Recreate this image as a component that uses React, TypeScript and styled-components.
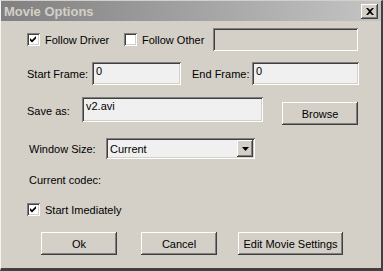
import styled, { createGlobalStyle } from "styled-components";

const GlobalStyle = createGlobalStyle`
  html, body {
    margin: 0;
    padding: 0;
    background: #d4d0c8;
  }
  body {
    font-family: "Liberation Sans", Arial, sans-serif;
    font-size: 11px;
    color: #000;
  }
`;

const raised = `
  box-shadow: inset -1px -1px #404040, inset 1px 1px #ffffff,
    inset -2px -2px #808080, inset 2px 2px #d4d0c8;
`;

const sunken = `
  box-shadow: inset 1px 1px #808080, inset -1px -1px #ffffff,
    inset 2px 2px #404040, inset -2px -2px #d4d0c8;
`;

const Window = styled.div`
  box-sizing: border-box;
  width: 383px;
  height: 271px;
  background: #d4d0c8;
  border-left: 1px solid #f4f4f4;
  border-top: 1px solid #d4d0c8;
  border-right: 2px solid #404040;
  border-bottom: 3px solid #404040;
  display: flex;
  flex-direction: column;
`;

const TitleBar = styled.div`
  height: 20px;
  display: flex;
  align-items: center;
  justify-content: space-between;
  padding: 0 3px 0 3px;
  background: linear-gradient(to right, #808080, #c4c4c4);
`;

const Title = styled.span`
  font-weight: bold;
  font-size: 13px;
  color: #d4d0c8;
`;

const CloseBtn = styled.div`
  width: 17px;
  height: 15px;
  background: #d4d0c8;
  display: flex;
  align-items: center;
  justify-content: center;
  ${raised}
`;

const Body = styled.div`
  display: flex;
  flex-direction: column;
  padding-left: 26px;
`;

const Row = styled.div<{ $top: number; $h: number; $left?: number; $align?: string }>`
  display: flex;
  align-items: ${(p) => p.$align ?? "center"};
  margin-top: ${(p) => p.$top}px;
  height: ${(p) => p.$h}px;
  padding-left: ${(p) => p.$left ?? 0}px;
`;

const Label = styled.span<{ $w?: number }>`
  width: ${(p) => (p.$w ? `${p.$w}px` : "auto")};
  flex-shrink: 0;
  white-space: nowrap;
`;

const Edit = styled.div<{ $w: number; $h?: number; $disabled?: boolean }>`
  box-sizing: border-box;
  width: ${(p) => p.$w}px;
  height: ${(p) => p.$h ?? 23}px;
  padding: 3px 4px;
  background: ${(p) => (p.$disabled ? "#d4d0c8" : "#f0f0f0")};
  white-space: nowrap;
  ${sunken}
`;

const CheckWrap = styled.label<{ $w?: number }>`
  display: flex;
  align-items: center;
  gap: 5px;
  width: ${(p) => (p.$w ? `${p.$w}px` : "auto")};
  flex-shrink: 0;
`;

const Box = styled.span`
  box-sizing: border-box;
  width: 13px;
  height: 13px;
  background: #ffffff;
  display: flex;
  align-items: center;
  justify-content: center;
  ${sunken}
`;

const Combo = styled.div`
  box-sizing: border-box;
  width: 149px;
  height: 21px;
  background: #f0f0f0;
  display: flex;
  align-items: center;
  justify-content: space-between;
  padding: 2px 2px 2px 4px;
  ${sunken}
`;

const DropBtn = styled.div`
  width: 16px;
  height: 17px;
  background: #d4d0c8;
  display: flex;
  align-items: center;
  justify-content: center;
  ${raised}
`;

const Button = styled.div<{ $w: number; $h?: number; $gap?: number }>`
  box-sizing: border-box;
  width: ${(p) => p.$w}px;
  height: ${(p) => p.$h ?? 23}px;
  margin-left: ${(p) => p.$gap ?? 0}px;
  display: flex;
  align-items: center;
  justify-content: center;
  background: #d4d0c8;
  flex-shrink: 0;
  ${raised}
`;

const Check = ({ checked }: { checked: boolean }) => (
  <Box>
    {checked && (
      <svg width="7" height="7" viewBox="0 0 7 7">
        <path d="M0 2 L2 4 L6 0 L6 2.5 L2 6.5 L0 4.5 Z" fill="#000" />
      </svg>
    )}
  </Box>
);

export default function App() {
  return (
    <>
      <GlobalStyle />
      <Window>
        <TitleBar>
          <Title>Movie Options</Title>
          <CloseBtn>
            <svg width="8" height="7" viewBox="0 0 8 7">
              <path d="M0 0h2l2 2 2-2h2L5 3.5 8 7H6L4 5 2 7H0l3-3.5z" fill="#000" />
            </svg>
          </CloseBtn>
        </TitleBar>
        <Body>
          <Row $top={7} $h={23}>
            <CheckWrap $w={97}>
              <Check checked />
              Follow Driver
            </CheckWrap>
            <CheckWrap $w={89}>
              <Check checked={false} />
              Follow Other
            </CheckWrap>
            <Edit $w={145} $disabled />
          </Row>
          <Row $top={11} $h={23}>
            <Label $w={65}>Start Frame:</Label>
            <Edit $w={89}>0</Edit>
            <Label $w={60} style={{ marginLeft: 11 }}>End Frame:</Label>
            <Edit $w={107}>0</Edit>
          </Row>
          <Row $top={12} $h={27} $align="flex-start">
            <Label $w={55} style={{ alignSelf: "center" }}>Save as:</Label>
            <Edit $w={181} $h={25}>v2.avi</Edit>
            <Button $w={76} $h={23} $gap={19} style={{ marginTop: 5 }}>Browse</Button>
          </Row>
          <Row $top={14} $h={21} $left={2}>
            <Label $w={77}>Window Size:</Label>
            <Combo>
              Current
              <DropBtn>
                <svg width="7" height="4" viewBox="0 0 7 4">
                  <path d="M0 0h7L3.5 4z" fill="#000" />
                </svg>
              </DropBtn>
            </Combo>
          </Row>
          <Row $top={14} $h={14} $left={2}>
            <Label>Current codec:</Label>
          </Row>
          <Row $top={16} $h={13}>
            <CheckWrap>
              <Check checked />
              Start Imediately
            </CheckWrap>
          </Row>
          <Row $top={16} $h={23} $left={14}>
            <Button $w={76}>Ok</Button>
            <Button $w={76} $gap={24}>Cancel</Button>
            <Button $w={105} $gap={21}>Edit Movie Settings</Button>
          </Row>
        </Body>
      </Window>
    </>
  );
}
